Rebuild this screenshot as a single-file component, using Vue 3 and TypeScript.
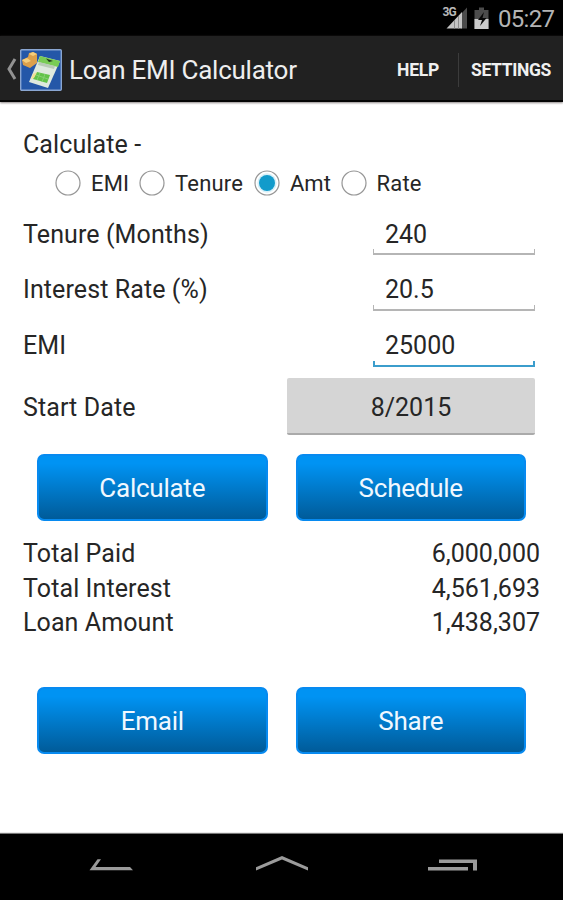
<script setup lang="ts">
import { ref } from 'vue'

const modes = [
  { name: 'EMI', cls: 'emi' },
  { name: 'Tenure', cls: 'tenure' },
  { name: 'Amt', cls: 'amt' },
  { name: 'Rate', cls: 'rate' },
]
const selected = ref('Amt')
const focused = ref('EMI')
const fields = [
  { label: 'Tenure (Months)', value: '240', cls: 'f-tenure' },
  { label: 'Interest Rate (%)', value: '20.5', cls: 'f-rate' },
  { label: 'EMI', value: '25000', cls: 'f-emi' },
]
const results = [
  { label: 'Total Paid', value: '6,000,000' },
  { label: 'Total Interest', value: '4,561,693' },
  { label: 'Loan Amount', value: '1,438,307' },
]
</script>

<template>
  <div class="screen">
    <div class="status">
      <svg class="status-icons" width="52" height="30" viewBox="-2 -4 52 30">
        <path d="M24 21.500V0.500L18 7V21.500Z" fill="#4b4b4b" />
        <path d="M3.500 21.500L19 5V21.500Z" fill="#c4c4c4" />
        <path d="M11.500 13V21.500M15.500 9V21.500" stroke="#8b8b8b" stroke-width="1" />
        <text x="-0.500" y="9" class="net">3G</text>
        <path d="M31.500 3H36V0.500H41V3H45.500V22H31.500Z" fill="#4c4c4c" />
        <path d="M31.500 12H45.500V22H31.500Z" fill="#cacaca" />
        <path d="M41 5L35 13H39L37 19L43.500 11H39.500Z" fill="#080808" />
      </svg>
      <span class="clock">05:27</span>
    </div>
    <header class="bar">
      <svg class="up" width="12" height="24" viewBox="0 0 12 24"><path d="M10 2L4 12L10 22" fill="none" stroke="#929292" stroke-width="3" /></svg>
      <svg class="logo" width="42" height="42" viewBox="0 0 42 42">
        <rect x="0.700" y="0.700" width="40.600" height="40.600" rx="1" fill="#2457a8" stroke="#8aa6d1" stroke-width="1.400" />
        <path d="M2 11L8 8L9 4L13 3L17 5V14L10 19L3 16Z" fill="#dca04b" />
        <path d="M9 5L13 3L17 5L13 7ZM2 11L7 9L11 12L6 14Z" fill="#f5ce7c" />
        <path d="M20 7L40 12L28 39L9 33Z" fill="#dfe9de" />
        <path d="M20 7L40 12L38 18L18 13Z" fill="#79cc54" />
        <path d="M19 13L35 17L34 20L18 16Z" fill="#b9cbb6" />
        <path d="M26 9.500L33 12L29 13Z" fill="#20351d" />
        <path d="M17 23L30 26L27 34L13 30Z" fill="#62c348" />
        <path d="M16 26L28 30M20 24L17 31M25 25L22 33" stroke="#85d072" stroke-width="1" />
        <path d="M13 25L17 23L14 29L11 30Z" fill="#f2df93" />
      </svg>
      <h1>Loan EMI Calculator</h1>
      <button class="action help">HELP</button>
      <span class="divider"></span>
      <button class="action settings">SETTINGS</button>
    </header>

    <main>
      <div class="heading">Calculate -</div>
      <div class="modes">
        <div v-for="m in modes" :key="m.name" class="mode" :class="m.cls" @click="selected = m.name">
          <svg width="26" height="26" viewBox="0 0 26 26">
            <circle cx="13" cy="13" r="12" fill="#fff" stroke="#969696" stroke-width="1.200" />
            <template v-if="selected === m.name">
              <circle cx="13" cy="13" r="9.700" fill="#d8f0f8" />
              <circle cx="13" cy="13" r="8" fill="#129bcb" />
            </template>
          </svg>
          <span>{{ m.name }}</span>
        </div>
      </div>

      <div v-for="f in fields" :key="f.label" class="field" :class="f.cls" @click="focused = f.label">
        <span class="label">{{ f.label }}</span>
        <div class="input" :class="{ active: focused === f.label }"><span>{{ f.value }}</span></div>
      </div>
      <div class="date-row">
        <span class="label">Start Date</span>
        <button class="date"><span>8/2015</span></button>
      </div>

      <div class="buttons">
        <button class="blue"><span>Calculate</span></button>
        <button class="blue"><span>Schedule</span></button>
      </div>
      <div class="results">
        <div v-for="r in results" :key="r.label" class="result">
          <span class="name">{{ r.label }}</span><span class="value">{{ r.value }}</span>
        </div>
      </div>
      <div class="buttons second">
        <button class="blue"><span>Email</span></button>
        <button class="blue"><span>Share</span></button>
      </div>
    </main>

    <nav>
      <svg width="563" height="66" viewBox="0 0 563 66" fill="#9b9b9b">
        <path d="M97.500 25.300H101L95.500 33H130L133 36.200H89.500Z" />
        <path d="M256 33.200L282 22L308 33.200V36.500L282 25.500L256 36.500Z" />
        <path d="M439 25.500H477V36.500H473V29H439ZM428 33H468V36.500H428Z" />
      </svg>
    </nav>
  </div>
</template>

<style>
body { margin: 0; background: #fff; }
</style>

<style scoped>
.screen { width: 563px; height: 900px; display: flex; flex-direction: column; background: #fff; font-family: Roboto, sans-serif; color: #262626; overflow: hidden; }
button { border: 0; padding: 0; margin: 0; background: none; font-family: inherit; color: inherit; }
.status { height: 36px; background: #000; display: flex; align-items: flex-start; justify-content: flex-end; padding-right: 8px; box-sizing: border-box; flex: none; }
.status-icons { margin: 3px 5px 0 0; overflow: visible; }
.net { font-size: 12px; font-weight: 700; fill: #b9b9b9; font-family: Roboto, sans-serif; letter-spacing: -0.8px; }
.clock { width: 57px; font-size: 24px; line-height: 39px; color: #b4b4b4; letter-spacing: -0.7px; }
.bar { height: 66px; flex: none; background: #212121; border-bottom: 2px solid #050505; box-shadow: 0 1px 2px #8b8585; display: flex; align-items: center; box-sizing: border-box; }
.up { margin-left: 5px; margin-top: 2px; }
.logo { margin-left: 3px; margin-top: 3px; }
h1 { margin: 4px 0 0 7px; font-size: 26px; letter-spacing: -0.25px; font-weight: 400; color: #eee; line-height: 32px; white-space: nowrap; width: 328px; }
.action { font-size: 17.5px; font-weight: 700; color: #f0f0f0; line-height: 24px; white-space: nowrap; margin-top: 4px; text-align: left; letter-spacing: -0.2px; }
.settings { letter-spacing: -0.35px; }
.help { width: 61px; }
.divider { width: 1px; height: 34px; background: #3c3c3c; margin: 3px 12px 0 0; }
main { flex: 1; display: flex; flex-direction: column; padding: 26px 23px 0; }
.heading, .label, .result { font-size: 25px; white-space: nowrap; }
.heading, .label, .name { letter-spacing: 0.1px; }
.heading { line-height: 34px; height: 34px; }
.modes { display: flex; margin: 8px 0 0 32px; height: 26px; font-size: 22px; }
.mode { display: flex; align-items: center; white-space: nowrap; gap: 10px; line-height: 28px; letter-spacing: 0.2px; }
.mode svg { flex: none; }
.mode span { padding-top: 1px; }
.emi { width: 84px; }
.tenure { width: 115px; }
.amt { width: 86.5px; }
.amt span { letter-spacing: 0; }
.field { height: 56px; display: flex; justify-content: space-between; align-items: flex-start; line-height: 36px; }
.f-tenure { margin-top: 21px; height: 55px; }
.input { width: 162px; height: 39px; margin-right: 5px; padding: 0 0 4px 12px; box-sizing: border-box; font-size: 25px; line-height: 36px; background: linear-gradient(#b5b5b5, #b5b5b5) bottom / 100% 2px no-repeat, linear-gradient(#b5b5b5, #b5b5b5) left bottom / 1px 6px no-repeat, linear-gradient(#b5b5b5, #b5b5b5) right bottom / 1px 6px no-repeat; }
.f-tenure .input { height: 38px; }
.input.active { background: linear-gradient(#3b9dcc, #3b9dcc) bottom / 100% 2px no-repeat, linear-gradient(#3b9dcc, #3b9dcc) left bottom / 2px 6px no-repeat, linear-gradient(#3b9dcc, #3b9dcc) right bottom / 2px 6px no-repeat; }
.f-emi { height: 50px; }
.date-row { display: flex; justify-content: space-between; align-items: center; height: 57px; margin-right: 5px; }
.date-row .label { padding-top: 2px; }
.date { width: 248px; height: 57px; padding-top: 3px; background: #d5d5d5; border-bottom: 2px solid #aaa; border-radius: 2px; font-size: 25px; }
.buttons { display: flex; gap: 28px; margin: 19px 0 0 14px; }
.blue { width: 230.5px; height: 67px; flex: none; box-sizing: border-box; border: 2px solid #078af0; border-radius: 7px; background: linear-gradient(#0093f3 12%, #005b99); color: #f0f8ff; font-size: 26px; letter-spacing: -0.25px; }
.results { margin: 16px 0 0; }
.result { display: flex; justify-content: space-between; height: 34.5px; line-height: 34.5px; }
.second { margin-top: 46px; }
.second .blue { padding-top: 2px; }
nav { height: 66px; flex: none; background: #000; box-shadow: 0 -1px 1px #777; }
nav svg { display: block; }
</style>
